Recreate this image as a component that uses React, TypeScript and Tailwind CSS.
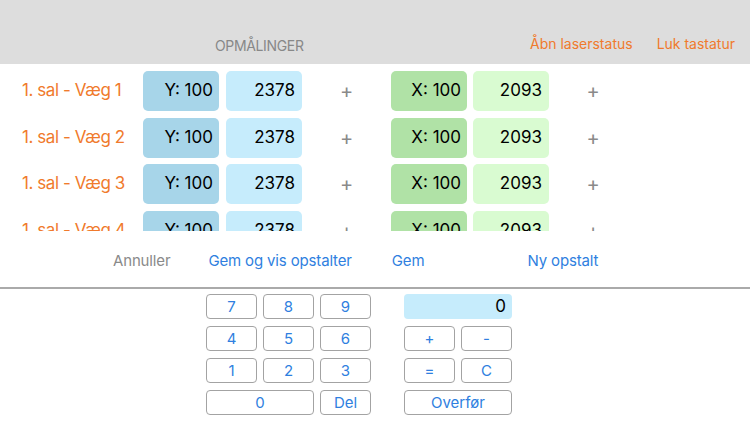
import React from "react";

const rows = [1, 2, 3, 4].map((n) => ({
  label: `1. sal - Væg ${n}`,
  y: "Y: 100",
  yVal: "2378",
  x: "X: 100",
  xVal: "2093",
}));

const KeyBtn = ({ label, wide }: { label: string; wide?: boolean }) => (
  <button
    className={`h-[25px] ${wide ? "col-span-2" : ""} rounded-[4px] border border-[#a3a3a3] bg-white text-[15px] text-[#2f7fe0] leading-none`}
  >
    {label}
  </button>
);

const App = () => {
  return (
    <div
      className="w-[750px] h-[422px] overflow-hidden bg-white"
      style={{ fontFamily: "Inter, 'Liberation Sans', sans-serif" }}
    >
      {/* Header */}
      <div className="h-[64px] bg-[#dddddd] flex items-end pb-[8px]">
        <div className="w-[520px] pl-[215px] text-[14px] text-[#888888] tracking-tight">
          OPMÅLINGER
        </div>
        <div className="flex-1 flex justify-end gap-[24px] pr-[15px] text-[14px] text-[#f07a2c] pb-[2px]">
          <span>Åbn laserstatus</span>
          <span>Luk tastatur</span>
        </div>
      </div>

      {/* Measurements */}
      <div className="h-[167px] overflow-hidden pt-[7px] flex flex-col gap-[6.5px]">
        {rows.map((r, i) => (
          <div key={i} className="flex items-center h-[40px] shrink-0">
            <div className="w-[143px] pl-[22px] text-[17px] text-[#f07a2c] tracking-tight">
              {r.label}
            </div>
            <div className="w-[76px] h-[40px] rounded-[5px] bg-[#a7d5e9] flex items-center justify-end pr-[6px] text-[17px] text-black">
              {r.y}
            </div>
            <div className="ml-[7px] w-[76px] h-[40px] rounded-[5px] bg-[#c6ecfc] flex items-center justify-end pr-[7px] text-[17px] text-black">
              {r.yVal}
            </div>
            <div className="w-[89px] text-center text-[20px] text-[#8a8a8a]">+</div>
            <div className="w-[76px] h-[40px] rounded-[5px] bg-[#b0e2a6] flex items-center justify-end pr-[6px] text-[17px] text-black">
              {r.x}
            </div>
            <div className="ml-[6px] w-[76px] h-[40px] rounded-[5px] bg-[#d9fbd1] flex items-center justify-end pr-[7px] text-[17px] text-black">
              {r.xVal}
            </div>
            <div className="w-[88px] text-center text-[20px] text-[#8a8a8a]">+</div>
          </div>
        ))}
      </div>

      {/* Actions */}
      <div className="h-[58px] flex items-center pt-[4px] text-[15px] tracking-[-0.15px] border-b-[2px] border-[#aaaaaa]">
        <span className="ml-[113px] text-[#8a8a8a]">Annuller</span>
        <span className="ml-[38px] text-[#2f7fe0]">Gem og vis opstalter</span>
        <span className="ml-[40px] text-[#2f7fe0]">Gem</span>
        <span className="ml-[103px] text-[#2f7fe0]">Ny opstalt</span>
      </div>

      {/* Keypad */}
      <div className="flex pt-[5px] pl-[206px] gap-[33px]">
        <div className="grid grid-cols-[51px_51px_51px] gap-x-[6px] gap-y-[7px]">
          {["7", "8", "9", "4", "5", "6", "1", "2", "3"].map((k) => (
            <KeyBtn key={k} label={k} />
          ))}
          <KeyBtn label="0" wide />
          <KeyBtn label="Del" />
        </div>
        <div className="grid grid-cols-[51px_51px] gap-x-[6px] gap-y-[7px]">
          <div className="col-span-2 h-[25px] rounded-[4px] bg-[#c6ecfc] flex items-center justify-end pr-[6px] text-[17px] text-black">
            0
          </div>
          <KeyBtn label="+" />
          <KeyBtn label="-" />
          <KeyBtn label="=" />
          <KeyBtn label="C" />
          <KeyBtn label="Overfør" wide />
        </div>
      </div>
    </div>
  );
};

export default App;
